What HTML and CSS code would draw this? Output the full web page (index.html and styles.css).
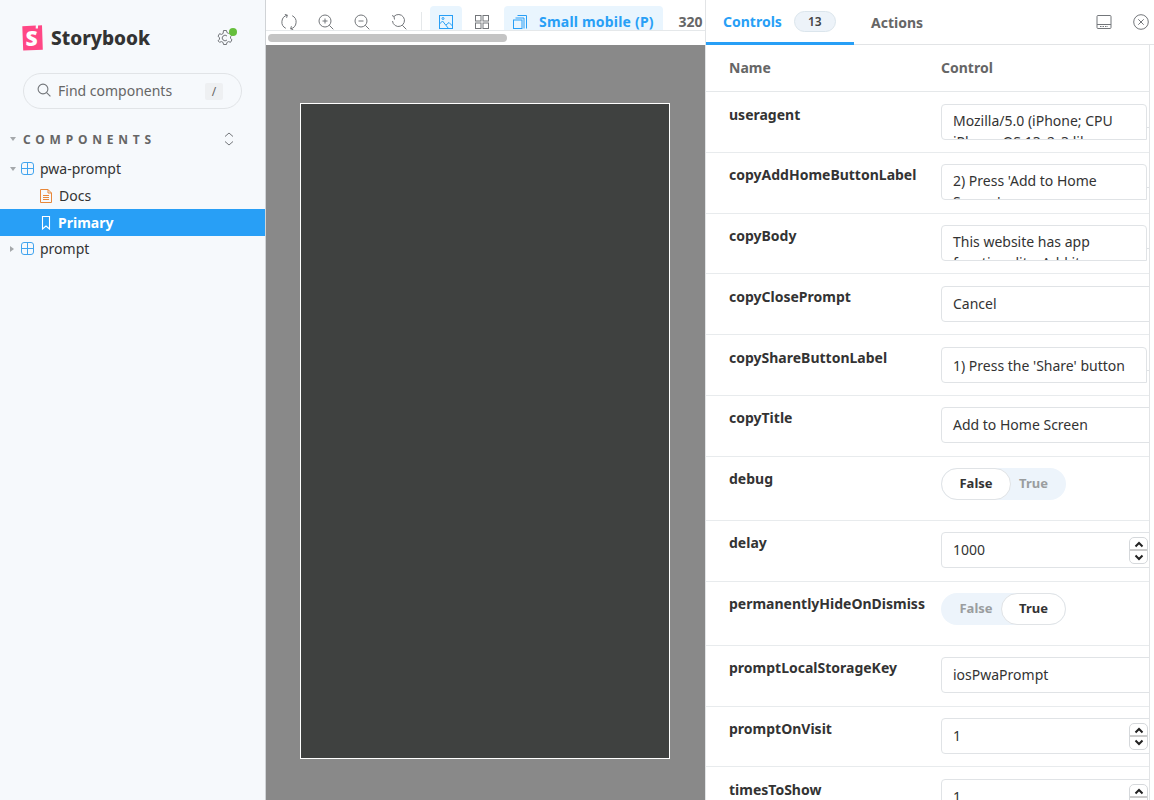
FILE: index.html
```html
<!DOCTYPE html>
<html lang="en">
<head>
  <meta charset="UTF-8">
  <meta name="viewport" content="width=device-width, initial-scale=1.0">
  <title>Storybook</title>
  <link rel="stylesheet" href="styles.css">
</head>
<body>
  <div class="app">
    <!-- Sidebar -->
    <aside class="sidebar">
      <div class="brand">
        <svg class="brand-logo" width="21" height="26" viewBox="0 0 21 26">
          <path fill="#ff4785" d="M.3 1.300 13.800.6l-.1 2.900 2.200.1.200-3.100 3.900-.2.8 24.500L1.200 25.600z"/>
          <text x="3.500" y="20.500" class="brand-s">S</text>
        </svg>
        <span class="brand-name">Storybook</span>
        <span class="settings">
          <svg width="18" height="18" viewBox="0 0 18 18" fill="none" stroke="#73767a" stroke-width="1">
            <path d="M7.500 1.500h3l.4 2 1.600.9 2-.7 1.500 2.600-1.500 1.300v1.800l1.500 1.300-1.500 2.600-2-.7-1.600.9-.4 2h-3l-.4-2-1.600-.9-2 .7L2 11.700l1.500-1.300V8.600L2 7.300l1.500-2.600 2 .7 1.600-.9z"/>
            <path d="M11 7a2.800 2.800 0 1 0 0 4"/>
          </svg>
          <i class="status-dot"></i>
        </span>
      </div>

      <div class="search">
        <svg width="14" height="14" viewBox="0 0 14 14" fill="none" stroke="#73767a" stroke-width="1.100">
          <circle cx="6" cy="6" r="4.900"/><path d="m9.600 9.600 3.800 3.800"/>
        </svg>
        <span class="search-text">Find components</span>
        <span class="search-key">/</span>
      </div>

      <div class="group-head">
        <span class="caret caret-down"></span>
        <span class="group-title">COMPONENTS</span>
        <svg width="10" height="14" viewBox="0 0 10 14" fill="none" stroke="#73767a" stroke-width="1">
          <path d="m1 4.500 4-3.500 4 3.500M1 9.500l4 3.500 4-3.500"/>
        </svg>
      </div>

      <ul class="tree">
        <li class="tree-row">
          <span class="caret caret-down"></span>
          <svg class="comp-icon" width="13" height="13" viewBox="0 0 13 13" fill="none" stroke="#42a5ef" stroke-width="1">
            <rect x=".5" y=".5" width="12" height="12" rx="2.500"/><path d="M6.500 .5v12M.5 6.500h12"/>
          </svg>
          <span>pwa-prompt</span>
        </li>
        <li class="tree-row tree-leaf">
          <svg width="12" height="14" viewBox="0 0 12 14" fill="none" stroke="#e8883a" stroke-width="1">
            <path d="M.5.500h7.500l3.500 3.500v9.500H.5z"/><path d="M8 .5v3.500h3.500M3 6.500h6M3 8.500h6M3 10.500h6"/>
          </svg>
          <span>Docs</span>
        </li>
        <li class="tree-row tree-leaf tree-active">
          <svg width="10" height="14" viewBox="0 0 10 14" fill="none" stroke="#fff" stroke-width="1.100">
            <path d="M1.500.5h7v12.500L5 10l-3.500 3z"/>
          </svg>
          <span>Primary</span>
        </li>
        <li class="tree-row tree-last">
          <span class="caret caret-right"></span>
          <svg class="comp-icon" width="13" height="13" viewBox="0 0 13 13" fill="none" stroke="#42a5ef" stroke-width="1">
            <rect x=".5" y=".5" width="12" height="12" rx="2.500"/><path d="M6.500 .5v12M.5 6.500h12"/>
          </svg>
          <span>prompt</span>
        </li>
      </ul>
    </aside>

    <!-- Canvas -->
    <main class="stage">
      <div class="toolbar">
        <button class="tool">
          <svg width="16" height="16" viewBox="0 0 16 16" fill="none" stroke="#73767a" stroke-width="1">
            <path d="M6.300 1.200A7 7 0 0 0 4.800 14.300M9.700 14.800A7 7 0 0 0 11.200 1.700"/>
            <path d="M3.800.4 6.300 1.200 5.600 3.800M12.200 15.600l-2.500-.8.700-2.600"/>
          </svg>
        </button>
        <button class="tool">
          <svg width="16" height="16" viewBox="0 0 16 16" fill="none" stroke="#73767a" stroke-width="1">
            <circle cx="7" cy="7" r="6"/><path d="m11.300 11.300 4 4M4.500 7h5M7 4.500v5"/>
          </svg>
        </button>
        <button class="tool">
          <svg width="16" height="16" viewBox="0 0 16 16" fill="none" stroke="#73767a" stroke-width="1">
            <circle cx="7" cy="7" r="6"/><path d="m11.300 11.300 4 4M4.500 7h5"/>
          </svg>
        </button>
        <button class="tool">
          <svg width="16" height="16" viewBox="0 0 16 16" fill="none" stroke="#73767a" stroke-width="1">
            <path d="M3 2.500A6 6 0 1 1 1.500 7M1 1.500l2 1 .5 3M11.300 11.300l4 4"/>
          </svg>
        </button>
        <span class="tool-sep"></span>
        <button class="tool tool-on">
          <svg width="14" height="14" viewBox="0 0 14 14" fill="none" stroke="#289ff6" stroke-width="1">
            <rect x=".5" y=".5" width="13" height="13"/><path d="m.5 9 3-3 6 7.500M7 10l3-2.500 3.500 3.500"/><circle cx="4" cy="3.500" r="1"/>
          </svg>
        </button>
        <button class="tool">
          <svg width="14" height="14" viewBox="0 0 14 14" fill="none" stroke="#73767a" stroke-width="1">
            <rect x=".5" y=".5" width="5.500" height="5.500"/><rect x="8" y=".5" width="5.500" height="5.500"/>
            <rect x=".5" y="8" width="5.500" height="5.500"/><rect x="8" y="8" width="5.500" height="5.500"/>
          </svg>
        </button>
        <button class="tool tool-on tool-wide">
          <svg width="14" height="14" viewBox="0 0 14 14" fill="none" stroke="#289ff6" stroke-width="1">
            <rect x=".5" y="5" width="8.500" height="8.500"/><path d="M2.500 3h8.500v10.500M4.500.5h9v13"/>
          </svg>
          <span class="tool-label">Small mobile (P)</span>
        </button>
        <span class="tool-size">320</span>
      </div>
      <div class="hscroll"><span class="hscroll-thumb"></span></div>
      <div class="preview">
        <div class="frame"></div>
      </div>
    </main>

    <!-- Addons panel -->
    <section class="panel">
      <div class="tabs">
        <span class="tab tab-on">Controls <b class="badge">13</b></span>
        <span class="tab">Actions</span>
        <span class="tab-actions">
          <svg width="16" height="14" viewBox="0 0 16 14" fill="none" stroke="#73767a" stroke-width="1">
            <rect x="1" y=".5" width="14" height="13" rx="1"/><path d="M1 9.500h14"/><path d="M4 11.500h8" stroke-dasharray="1.500 1"/>
          </svg>
          <svg width="16" height="16" viewBox="0 0 16 16" fill="none" stroke="#73767a" stroke-width="1">
            <circle cx="8" cy="8" r="7.300"/><path d="m5.300 5.300 5.400 5.400M10.700 5.300l-5.400 5.400"/>
          </svg>
        </span>
      </div>

      <div class="args">
        <div class="args-head"><span class="col-name">Name</span><span>Control</span></div>

        <div class="arg">
          <span class="arg-name">useragent</span>
          <div class="field field-cut"><p>Mozilla/5.0 (iPhone; CPU<br>iPhone OS 13_2_3 like</p></div>
          <span class="grip"></span>
        </div>
        <div class="arg">
          <span class="arg-name">copyAddHomeButtonLabel</span>
          <div class="field field-cut"><p>2) Press 'Add to Home<br>Screen'</p></div>
          <span class="grip"></span>
        </div>
        <div class="arg">
          <span class="arg-name">copyBody</span>
          <div class="field field-cut"><p>This website has app<br>functionality. Add it</p></div>
          <span class="grip"></span>
        </div>
        <div class="arg">
          <span class="arg-name">copyClosePrompt</span>
          <div class="field"><p>Cancel</p></div>
        </div>
        <div class="arg">
          <span class="arg-name">copyShareButtonLabel</span>
          <div class="field field-cut field-one"><p>1) Press the 'Share' button</p></div>
          <span class="grip"></span>
        </div>
        <div class="arg">
          <span class="arg-name">copyTitle</span>
          <div class="field"><p>Add to Home Screen</p></div>
        </div>
        <div class="arg arg-tall">
          <span class="arg-name">debug</span>
          <div class="toggle">
            <span class="toggle-opt toggle-on">False</span>
            <span class="toggle-opt toggle-end">True</span>
          </div>
        </div>
        <div class="arg">
          <span class="arg-name">delay</span>
          <div class="field">
            <p>1000</p>
            <span class="spin">
              <svg width="10" height="7" viewBox="0 0 10 7" fill="none" stroke="#222" stroke-width="2"><path d="m1.500 5.500 3.500-3.500 3.500 3.500"/></svg>
              <svg width="10" height="7" viewBox="0 0 10 7" fill="none" stroke="#222" stroke-width="2"><path d="m1.500 1.500 3.500 3.500 3.500-3.500"/></svg>
            </span>
          </div>
        </div>
        <div class="arg arg-tall">
          <span class="arg-name">permanentlyHideOnDismiss</span>
          <div class="toggle">
            <span class="toggle-opt toggle-start">False</span>
            <span class="toggle-opt toggle-on">True</span>
          </div>
        </div>
        <div class="arg">
          <span class="arg-name">promptLocalStorageKey</span>
          <div class="field"><p>iosPwaPrompt</p></div>
        </div>
        <div class="arg">
          <span class="arg-name">promptOnVisit</span>
          <div class="field">
            <p>1</p>
            <span class="spin">
              <svg width="10" height="7" viewBox="0 0 10 7" fill="none" stroke="#222" stroke-width="2"><path d="m1.500 5.500 3.500-3.500 3.500 3.500"/></svg>
              <svg width="10" height="7" viewBox="0 0 10 7" fill="none" stroke="#222" stroke-width="2"><path d="m1.500 1.500 3.500 3.500 3.500-3.500"/></svg>
            </span>
          </div>
        </div>
        <div class="arg">
          <span class="arg-name">timesToShow</span>
          <div class="field">
            <p>1</p>
            <span class="spin">
              <svg width="10" height="7" viewBox="0 0 10 7" fill="none" stroke="#222" stroke-width="2"><path d="m1.500 5.500 3.500-3.500 3.500 3.500"/></svg>
              <svg width="10" height="7" viewBox="0 0 10 7" fill="none" stroke="#222" stroke-width="2"><path d="m1.500 1.500 3.500 3.500 3.500-3.500"/></svg>
            </span>
          </div>
        </div>
      </div>
    </section>
  </div>
</body>
</html>
```

FILE: styles.css
```css
* {
  box-sizing: border-box;
}

html,
body {
  margin: 0;
  height: 100%;
  overflow: hidden;
}

body {
  font-family: "Noto Sans", "Open Sans", sans-serif;
  font-size: 14px;
  color: #333;
  background: #fff;
}

.app {
  display: flex;
  width: 1154px;
  height: 800px;
}

/* Sidebar */
.sidebar {
  flex: 0 0 266px;
  background: #f6f9fc;
  border-right: 1px solid #d0d3d6;
}

.brand {
  display: flex;
  align-items: center;
  height: 26px;
  margin: 25px 0 0 22px;
}

.brand-s {
  font-family: "Open Sans", sans-serif;
  font-size: 21px;
  font-weight: 800;
  fill: #fff;
}

.brand-name {
  margin-left: 8px;
  font-size: 19px;
  font-weight: 800;
  color: #333;
}

.settings {
  position: relative;
  margin-left: 66px;
  width: 18px;
  height: 18px;
}

.status-dot {
  position: absolute;
  top: -1px;
  right: -3px;
  width: 8px;
  height: 8px;
  border-radius: 50%;
  background: #66bf3c;
}

.search {
  display: flex;
  align-items: center;
  width: 219px;
  height: 36px;
  margin: 22px 0 0 23px;
  padding: 0 18px 2px 13px;
  border: 1px solid #e1e4e7;
  border-radius: 18px;
}

.search-text {
  flex: 1;
  margin-left: 7px;
  color: #666;
}

.search-key {
  width: 18px;
  height: 17px;
  margin-top: 2px;
  border-radius: 2px;
  background: #eef0f2;
  color: #666;
  font-size: 12px;
  line-height: 17px;
  text-align: center;
}

.group-head {
  display: flex;
  align-items: center;
  height: 20px;
  margin-top: 20px;
  padding-left: 10px;
}

.group-title {
  flex: 0 0 201px;
  margin-left: 7px;
  color: #666;
  font-size: 12px;
  font-weight: 700;
  letter-spacing: 4.8px;
}

.caret {
  flex: none;
  width: 0;
  height: 0;
  border-style: solid;
  border-color: transparent;
}

.caret-down {
  border-width: 4px 3px 0;
  border-top-color: #a5a8ab;
}

.caret-right {
  border-width: 3px 0 3px 4px;
  border-left-color: #a5a8ab;
}

.tree {
  margin: 6px 0 0;
  padding: 0;
  list-style: none;
}

.tree-row {
  display: flex;
  align-items: center;
  height: 27px;
  padding-left: 10px;
  color: #333;
}

.comp-icon {
  margin: 0 6px 0 5px;
}

.caret-right + .comp-icon {
  margin-left: 7px;
}

.tree-leaf {
  gap: 7px;
  padding-left: 40px;
}

.tree-active {
  padding-left: 41px;
  background: #289ff6;
  color: #fff;
  font-weight: 700;
}

.tree-last {
  height: 25px;
}

/* Canvas */
.stage {
  display: flex;
  flex-direction: column;
  flex: 0 0 439px;
  min-width: 0;
  overflow: hidden;
}

.toolbar {
  display: flex;
  align-items: flex-start;
  flex: none;
  height: 31px;
  padding: 6px 0 0 7px;
  border-bottom: 1px solid #e5e8ea;
  overflow: hidden;
}

.tool {
  display: flex;
  align-items: center;
  justify-content: center;
  flex: none;
  width: 32px;
  height: 32px;
  padding: 0;
  margin-right: 4.67px;
  border: 0;
  border-radius: 4px;
  background: none;
  font: inherit;
}

.tool-on {
  background: #e9f5fe;
}

.tool-sep {
  flex: none;
  width: 1px;
  height: 20px;
  margin: 6px 8px 0 1px;
  background: #e5e8ea;
}

.tool-wide {
  width: 159px;
  gap: 12px;
  margin-left: 1px;
  color: #289ff6;
  font-weight: 700;
  letter-spacing: 0.2px;
}

.tool-label {
  padding-bottom: 2px;
}

.tool-size {
  flex: none;
  margin-left: 11px;
  padding-top: 6px;
  color: #666;
  font-weight: 700;
}

.hscroll {
  flex: none;
  height: 14px;
  padding: 3px 3px 0 2px;
  background: #fff;
}

.hscroll-thumb {
  display: block;
  width: 239px;
  height: 8px;
  border-radius: 4px;
  background: #c4c4c4;
}

.preview {
  flex: 1;
  padding: 58px 0 0 34px;
  background: #898989;
}

.frame {
  width: 370px;
  height: 656px;
  border: 1px solid #fff;
  background: #3f4140;
}

/* Addons panel */
.panel {
  display: flex;
  flex-direction: column;
  flex: 1;
  min-width: 0;
  border-left: 1px solid #e2e4e6;
  overflow: hidden;
}

.tabs {
  display: flex;
  align-items: stretch;
  flex: none;
  height: 45px;
  border-bottom: 1px solid #e2e4e6;
}

.tab {
  display: flex;
  align-items: center;
  padding: 0 17px;
  color: #666;
  font-weight: 700;
}

.tab-on {
  width: 148px;
  margin-bottom: -1px;
  border-bottom: 3px solid #289ff6;
  color: #289ff6;
}

.badge {
  min-width: 42px;
  margin-left: 12px;
  padding: 1px 0;
  border: 1px solid #dbe5ec;
  border-radius: 11px;
  background: #edf3f9;
  color: #444;
  font-size: 12px;
  font-weight: 600;
  text-align: center;
}

.tab-actions {
  display: flex;
  align-items: center;
  gap: 21px;
  margin-left: auto;
  padding-right: 5px;
}

.args {
  flex: 1;
  margin-right: 4px;
  border-right: 1px solid #e2e4e6;
  overflow: hidden;
}

.args-head {
  display: flex;
  align-items: center;
  height: 47px;
  padding: 0 0 2px 23px;
  border-bottom: 1px solid #e5e8ea;
  color: #666;
  font-weight: 700;
}

.col-name {
  width: 212px;
}

.arg {
  display: flex;
  height: 60.75px;
  padding: 10.6px 0 0 23px;
  border-bottom: 1px solid #e8ebed;
}

.arg-tall {
  height: 64.25px;
}

.arg-name {
  flex: 0 0 212px;
  font-weight: 700;
  line-height: 24px;
  white-space: nowrap;
}

.field {
  position: relative;
  flex: none;
  width: 220px;
  height: 36px;
  margin-top: 1px;
  padding: 0 11px;
  border: 1px solid #e0e3e6;
  border-radius: 4px;
  overflow: hidden;
}

.field p {
  margin: 0;
  line-height: 34px;
  white-space: nowrap;
}

.field-cut {
  width: 206px;
  border-bottom-right-radius: 0;
}

.field-cut p {
  padding-top: 5px;
  line-height: 21px;
}

.field-one p {
  padding-top: 7px;
}

.grip {
  flex: none;
  width: 3px;
  height: 1px;
  margin-top: 24px;
  background: #e0e3e6;
}

.toggle {
  display: flex;
  flex: none;
  width: 125px;
  height: 32px;
  margin-top: 1px;
  border-radius: 16px;
  background: #edf4fb;
  color: #9a9d9f;
  font-size: 13px;
  font-weight: 700;
}

.toggle-opt {
  display: flex;
  align-items: center;
  justify-content: center;
  padding-bottom: 2px;
}

.toggle-on {
  flex: 1;
  border: 1px solid #e0e3e6;
  border-radius: 16px;
  background: #fff;
  color: #333;
}

.toggle-end {
  width: 55px;
  padding-right: 10px;
}

.toggle-start {
  width: 60px;
  padding-left: 10px;
}

.spin {
  position: absolute;
  top: 4px;
  right: 12px;
  display: flex;
  flex-direction: column;
  align-items: center;
  justify-content: space-around;
  width: 19px;
  height: 27px;
  border: 1px solid #d5d8db;
  border-radius: 5px;
  background: linear-gradient(#fff 46%, #ccc 46%, #ccc 54%, #fff 54%);
}
```
